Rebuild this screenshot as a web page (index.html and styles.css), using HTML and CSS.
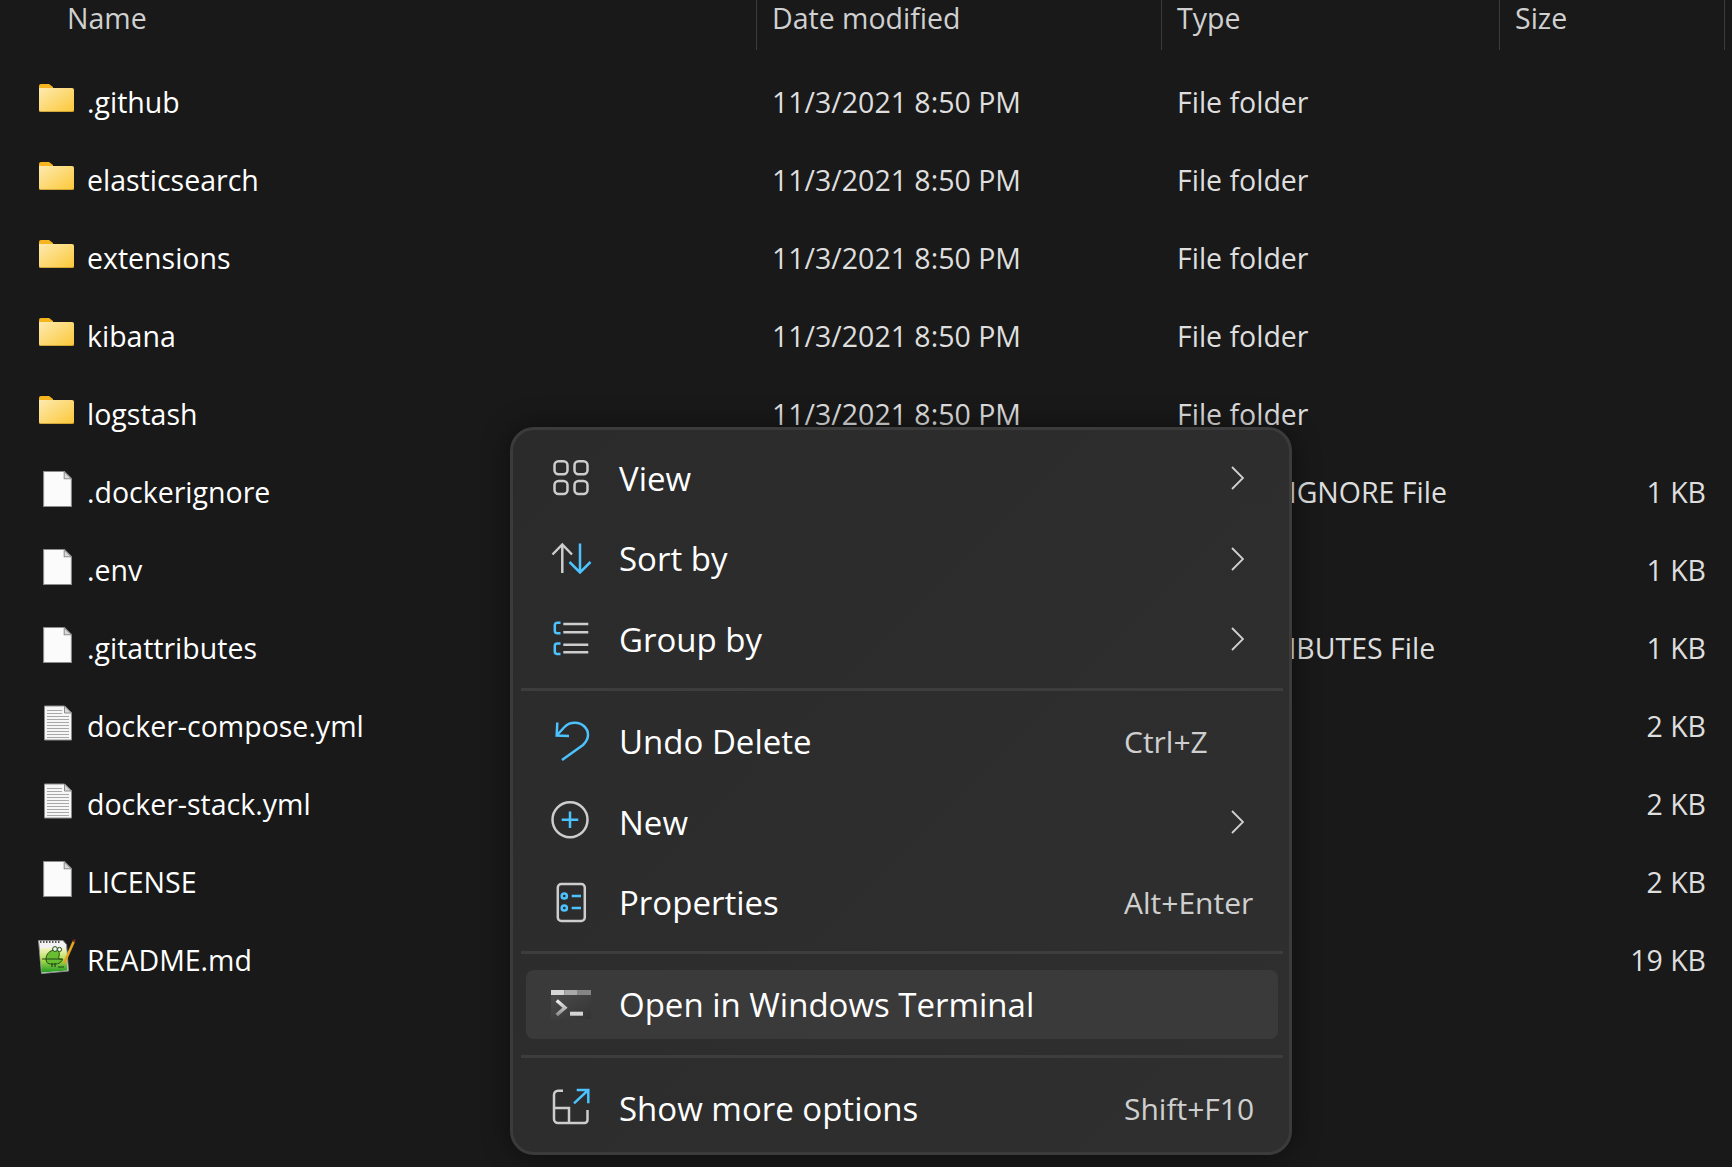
FILE: index.html
```html
<!DOCTYPE html>
<html lang="en">
<head>
<meta charset="utf-8">
<title>File Explorer</title>
<link rel="stylesheet" href="styles.css">
</head>
<body>
<svg class="defs" width="0" height="0" aria-hidden="true">
  <defs>
    <linearGradient id="fg" x1="0" y1="0" x2="1" y2="1"><stop offset="0" stop-color="#fdeab0"/><stop offset="1" stop-color="#fcc838"/></linearGradient>
    <linearGradient id="npg" x1="0" y1="0" x2="0" y2="1"><stop offset="0" stop-color="#f6f4c8"/><stop offset=".45" stop-color="#b6df55"/><stop offset="1" stop-color="#1f9a20"/></linearGradient>
    <linearGradient id="tg" x1="0" y1="0" x2="1" y2="1"><stop offset="0" stop-color="#4a4a4a"/><stop offset="1" stop-color="#343434"/></linearGradient>
    <linearGradient id="cg" x1="0" y1="0" x2="0" y2="1"><stop offset="0" stop-color="#f0f0f0"/><stop offset="1" stop-color="#8c8c8c"/></linearGradient>
    <symbol id="folder" viewBox="0 0 35 28">
      <path d="M0 2a2 2 0 0 1 2-2h8l4 3v6H0z" fill="#f6b51e"/>
      <path d="M0 4h33a2 2 0 0 1 2 2v20a2 2 0 0 1-2 2H2a2 2 0 0 1-2-2z" fill="url(#fg)"/>
      <path d="M0 27.500h35" stroke="#b98c22" stroke-width="1" opacity=".6"/>
    </symbol>
    <symbol id="doc" viewBox="0 0 28 35">
      <path d="M.5.500h20l7 7v27H.5z" fill="#fbfbfb" stroke="#8d8d8d"/>
      <path d="M20.500.500v7h7z" fill="#d8d8d8" stroke="#8d8d8d"/>
    </symbol>
    <symbol id="lined" viewBox="0 0 28 35">
      <path d="M.5.500h20l7 7v27H.5z" fill="#f6f6f6" stroke="#8d8d8d"/>
      <path d="M20.500.500v7h7z" fill="#d8d8d8" stroke="#8d8d8d"/>
      <path d="M3 5h15M3 8h15M3 11h22M3 14h22M3 17h22M3 20h22M3 23h22M3 26h22M3 29h22M3 32h22" stroke="#a8a8a8" stroke-width="1"/>
    </symbol>
  </defs>
</svg>

<div class="explorer">
  <div class="row head">
    <div class="cell name-h">Name</div>
    <div class="cell">Date modified</div>
    <div class="cell">Type</div>
    <div class="cell">Size</div>
  </div>
  <div class="list">
    <div class="row file"><div class="cell name"><svg class="fi"><use href="#folder"/></svg><span>.github</span></div><div class="cell">11/3/2021 8:50 PM</div><div class="cell">File folder</div><div class="cell size"></div></div>
    <div class="row file"><div class="cell name"><svg class="fi"><use href="#folder"/></svg><span>elasticsearch</span></div><div class="cell">11/3/2021 8:50 PM</div><div class="cell">File folder</div><div class="cell size"></div></div>
    <div class="row file"><div class="cell name"><svg class="fi"><use href="#folder"/></svg><span>extensions</span></div><div class="cell">11/3/2021 8:50 PM</div><div class="cell">File folder</div><div class="cell size"></div></div>
    <div class="row file"><div class="cell name"><svg class="fi"><use href="#folder"/></svg><span>kibana</span></div><div class="cell">11/3/2021 8:50 PM</div><div class="cell">File folder</div><div class="cell size"></div></div>
    <div class="row file"><div class="cell name"><svg class="fi"><use href="#folder"/></svg><span>logstash</span></div><div class="cell">11/3/2021 8:50 PM</div><div class="cell">File folder</div><div class="cell size"></div></div>
    <div class="row file"><div class="cell name"><svg class="di"><use href="#doc"/></svg><span>.dockerignore</span></div><div class="cell"></div><div class="cell">DOCKERIGNORE File</div><div class="cell size">1 KB</div></div>
    <div class="row file"><div class="cell name"><svg class="di"><use href="#doc"/></svg><span>.env</span></div><div class="cell"></div><div class="cell"></div><div class="cell size">1 KB</div></div>
    <div class="row file"><div class="cell name"><svg class="di"><use href="#doc"/></svg><span>.gitattributes</span></div><div class="cell"></div><div class="cell">GITATTRIBUTES File</div><div class="cell size">1 KB</div></div>
    <div class="row file"><div class="cell name"><svg class="di li"><use href="#lined"/></svg><span>docker-compose.yml</span></div><div class="cell"></div><div class="cell"></div><div class="cell size">2 KB</div></div>
    <div class="row file"><div class="cell name"><svg class="di li"><use href="#lined"/></svg><span>docker-stack.yml</span></div><div class="cell"></div><div class="cell"></div><div class="cell size">2 KB</div></div>
    <div class="row file"><div class="cell name"><svg class="di"><use href="#doc"/></svg><span>LICENSE</span></div><div class="cell"></div><div class="cell"></div><div class="cell size">2 KB</div></div>
    <div class="row file"><div class="cell name">
      <svg class="np" viewBox="0 0 38 36">
        <path d="M.5 1.500h24.500l3.500 4 2 26.500-27 2.500z" fill="#f2f2f2" stroke="#8a8a8a"/>
        <path d="M2 3h21" stroke="#555" stroke-width="1.800" stroke-dasharray="1.500 1.500"/>
        <path d="M1.800 9h26l1.700 22.500L3.600 33.500z" fill="url(#npg)"/>
        <path d="M8 20c0-5 4-9 9-9 4 0 5 3 4 6s1 4 3 3-1 5-6 5-10 1-10-5z" fill="#68bd30" stroke="#1f4f14" stroke-width="1"/>
        <circle cx="17" cy="10" r="2.400" fill="#f4f4f4" stroke="#1f4f14"/>
        <circle cx="21.500" cy="10.500" r="2.100" fill="#f4f4f4" stroke="#1f4f14"/>
        <path d="M4 20h20M14 24v4M17 24v4M20 28h6" stroke="#23421a" stroke-width="1.200"/>
        <path d="M26 24.500 36 2" stroke="#e3a51f" stroke-width="2.600"/>
        <path d="M35.500 3 36.800.500" stroke="#7e2a1c" stroke-width="2.200"/>
      </svg><span>README.md</span></div><div class="cell"></div><div class="cell"></div><div class="cell size">19 KB</div></div>
  </div>
</div>

<div class="menu">
  <div class="item">
    <svg class="ic" viewBox="0 0 40 40"><g class="g"><rect x="3.500" y="3.300" width="13" height="13" rx="4"/><rect x="23.500" y="3.300" width="13" height="13" rx="4"/><rect x="3.500" y="23" width="13" height="13" rx="4"/><rect x="23.500" y="23" width="13" height="13" rx="4"/></g></svg>
    <span class="label">View</span>
    <svg class="chev" viewBox="0 0 13 24"><path d="M1 1l11 11L1 23"/></svg>
  </div>
  <div class="item">
    <svg class="ic" viewBox="0 0 40 40"><path class="g" d="M11.300 34V5M1.500 15.500 11.300 5.500l9.700 10"/><path class="b" d="M29 4.500V33M18.500 23 29 33.500 39.500 23"/></svg>
    <span class="label">Sort by</span>
    <svg class="chev" viewBox="0 0 13 24"><path d="M1 1l11 11L1 23"/></svg>
  </div>
  <div class="item">
    <svg class="ic" viewBox="0 0 40 40"><path class="b" d="M9.500 3.700H6.300a2.500 2.500 0 0 0-2.500 2.500v5.500a2.500 2.500 0 0 0 2.500 2.500h3.200M9.500 24.500H6.300a2.500 2.500 0 0 0-2.500 2.500v5.500a2.500 2.500 0 0 0 2.500 2.500h3.200"/><path class="g" d="M12.300 5h25M12.300 13.200h25M12.300 25.800h25M12.300 33.200h25"/></svg>
    <span class="label">Group by</span>
    <svg class="chev" viewBox="0 0 13 24"><path d="M1 1l11 11L1 23"/></svg>
  </div>
  <div class="sep wide"></div>
  <div class="item">
    <svg class="ic" viewBox="0 0 40 40"><path class="b" d="M6.300 .5 5.700 13.500 18 14M5.700 13.500 13 5.500C16 2 20 .8 24 .8c7 0 13 5.200 13 12.200 0 4-2 7-5 10L11 38"/></svg>
    <span class="label">Undo Delete</span>
    <span class="key">Ctrl+Z</span>
  </div>
  <div class="item">
    <svg class="ic" viewBox="0 0 40 40"><circle class="g" cx="19" cy="17.700" r="17.500"/><path class="b" d="M19 9.400v16.600M10.700 17.700h16.600"/></svg>
    <span class="label">New</span>
    <svg class="chev" viewBox="0 0 13 24"><path d="M1 1l11 11L1 23"/></svg>
  </div>
  <div class="item">
    <svg class="ic" viewBox="0 0 40 40"><rect class="g" x="6.800" y="1" width="27" height="37" rx="3.500"/><circle class="b" cx="13.300" cy="13" r="2.600"/><circle class="b" cx="13.300" cy="25" r="2.600"/><path class="b" d="M20.700 13H30M20.700 25H30"/></svg>
    <span class="label">Properties</span>
    <span class="key">Alt+Enter</span>
  </div>
  <div class="sep"></div>
  <div class="item hot">
    <svg class="ic" viewBox="0 0 40 40">
      <path d="M0 10h40v24H0z" fill="url(#tg)"/>
      <path d="M0 5h13.300v5H0z" fill="#d6d6d6"/><path d="M13.300 5h13.400v5H13.300z" fill="#a9a9a9"/><path d="M26.700 5H40v5H26.700z" fill="#858585"/>
      <path d="M5.700 15.500 14 22.700 5.700 30" fill="none" stroke="url(#cg)" stroke-width="3.500"/>
      <path d="M19 26.700h13v4H19z" fill="#d4d4d4"/>
    </svg>
    <span class="label">Open in Windows Terminal</span>
  </div>
  <div class="sep"></div>
  <div class="item last">
    <svg class="ic" viewBox="0 0 40 40"><path class="g" d="M12 2.700H7a4 4 0 0 0-4 4V31a4 4 0 0 0 4 4h26.500a3 3 0 0 0 3-3V22M3 20h15v15"/><path class="b" d="M23 15.300 37.300 2M25.700 2h11.600v13.300"/></svg>
    <span class="label">Show more options</span>
    <span class="key">Shift+F10</span>
  </div>
</div>
</body>
</html>
```

FILE: styles.css
```css
* { box-sizing: border-box; }
html, body { margin: 0; height: 100%; }
body {
  width: 1732px;
  height: 1167px;
  overflow: hidden;
  background: #191919;
  font-family: "Open Sans", "Noto Sans", sans-serif;
  color: #fff;
  position: relative;
}
.defs { position: absolute; }

.row {
  display: grid;
  grid-template-columns: 757px 405px 338px 225px;
  font-size: 28.500px;
}
.cell { padding-left: 15px; white-space: nowrap; display: flex; align-items: center; }
.head { height: 50px; color: #d0d0d0; }
.head .cell { border-right: 1px solid #3c3c3c; height: 50px; padding-bottom: 14px; }
.head .name-h { padding-left: 67px; }

.list { padding-top: 13px; }
.file { height: 78px; color: #dedede; }
.file .name { color: #fff; padding-left: 0; position: relative; }
.name span { position: absolute; left: 87px; }
.fi, .di, .np { position: absolute; }
.fi { width: 35px; height: 28px; left: 39px; top: 21px; }
.di { width: 29px; height: 36px; left: 43px; top: 18px; }
.li { width: 28px; left: 44px; }
.np { width: 38px; height: 36px; left: 38px; top: 18px; }
.size { justify-content: flex-end; padding-right: 19px; padding-left: 0; }

.menu {
  position: absolute;
  left: 510px;
  top: 427px;
  width: 782px;
  height: 728px;
  border: 3px solid #3b3b3b;
  border-radius: 24px;
  background: linear-gradient(135deg, #2b2b2b, #2f2f2f);
  box-shadow: 0 0 28px rgba(0, 0, 0, .45);
  padding: 8px 8px 0;
  font-size: 33px;
}
.item {
  height: 80.500px;
  display: flex;
  align-items: center;
  padding-left: 30px;
  position: relative;
}
.label { margin-left: 28px; color: #fff; white-space: nowrap; }
.ic { width: 40px; height: 40px; flex: none; overflow: visible; }
.g, .b { fill: none; stroke-width: 2.500; }
.g { stroke: #cdcdcd; }
.b { stroke: #4cc2ff; }
.chev {
  position: absolute; left: 710px; top: 28px;
  width: 13px; height: 24px; fill: none; stroke: #d0d0d0; stroke-width: 1.800;
}
.key { position: absolute; left: 603px; font-size: 30px; color: #cfcfcf; white-space: nowrap; }
.sep { height: 3px; background: #3d3d3d; margin: 8px -2px 8px 0; }
.wide { margin-bottom: 11px; }
.hot {
  height: 69px;
  margin: 16px 3px 16px 5px;
  padding-left: 25px;
  background: #3a3a3a;
  border-radius: 8px;
}
.last { margin-top: 10px; }
```
